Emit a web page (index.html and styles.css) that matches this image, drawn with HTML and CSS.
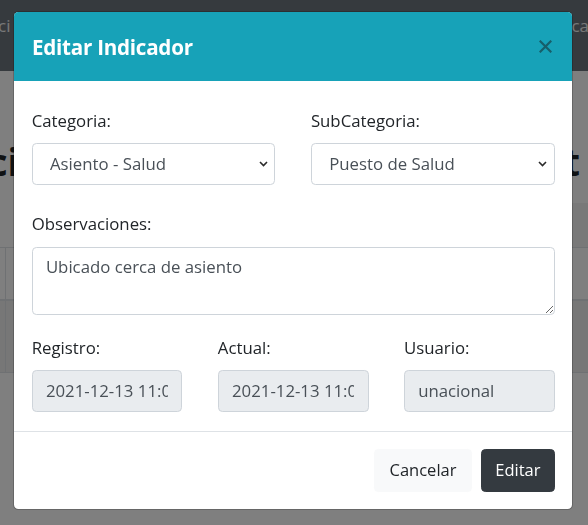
FILE: index.html
```html
<!DOCTYPE html>
<html lang="es">
<head>
<meta charset="utf-8">
<title>Editar Indicador</title>
<link rel="stylesheet" href="styles.css">
</head>
<body>
<div class="page">
  <header class="navbar">
    <span class="nav-left">ci</span>
    <span class="nav-right">ca</span>
  </header>
  <main class="content">
    <div class="heading">
      <span class="h-left">ci</span>
      <span class="h-right">t</span>
    </div>
    <div class="toolbar"><div class="toolbar-box"></div></div>
    <div class="table">
      <div class="trow thead"><div class="cell first"></div><div class="cell"></div></div>
      <div class="trow tbody"><div class="cell first"></div><div class="cell"></div></div>
    </div>
  </main>
</div>
<div class="backdrop"></div>
<div class="modal">
  <div class="modal-header">
    <h5 class="modal-title">Editar Indicador</h5>
    <button class="close" type="button" aria-label="Cerrar">
      <svg width="13" height="13" viewBox="0 0 13 13"><path d="M1.5 1.5 L11.5 11.5 M11.5 1.5 L1.5 11.5" stroke="currentColor" stroke-width="2.2" fill="none" stroke-linecap="square"/></svg>
    </button>
  </div>
  <div class="modal-body">
    <div class="grid-2 group-1">
      <div class="field">
        <label class="label">Categoria:</label>
        <div class="select-wrap">
          <select class="control select"><option>Asiento - Salud</option></select>
          <svg class="chevron" width="9" height="6" viewBox="0 0 9 6"><path d="M1 1 L4.5 4.5 L8 1" stroke="#2b2b2b" stroke-width="1.6" fill="none"/></svg>
        </div>
      </div>
      <div class="field">
        <label class="label">SubCategoria:</label>
        <div class="select-wrap">
          <select class="control select"><option>Puesto de Salud</option></select>
          <svg class="chevron" width="9" height="6" viewBox="0 0 9 6"><path d="M1 1 L4.5 4.5 L8 1" stroke="#2b2b2b" stroke-width="1.6" fill="none"/></svg>
        </div>
      </div>
    </div>
    <div class="field group-2">
      <label class="label">Observaciones:</label>
      <textarea class="control textarea" rows="2">Ubicado cerca de asiento</textarea>
    </div>
    <div class="grid-3 group-3">
      <div class="field">
        <label class="label">Registro:</label>
        <input class="control readonly" type="text" value="2021-12-13 11:05:32" readonly>
      </div>
      <div class="field">
        <label class="label">Actual:</label>
        <input class="control readonly" type="text" value="2021-12-13 11:05:32" readonly>
      </div>
      <div class="field">
        <label class="label">Usuario:</label>
        <input class="control readonly" type="text" value="unacional" readonly>
      </div>
    </div>
  </div>
  <div class="modal-footer">
    <button class="btn btn-light" type="button">Cancelar</button>
    <button class="btn btn-dark" type="button">Editar</button>
  </div>
</div>
</body>
</html>
```
FILE: styles.css
```css
* { box-sizing: border-box; }
html, body { margin: 0; padding: 0; }
body {
  width: 588px;
  height: 525px;
  overflow: hidden;
  background: #ffffff;
  font-family: "Open Sans", "Noto Sans", sans-serif;
  color: #212529;
}

/* ---------- page behind the modal ---------- */
.navbar {
  height: 71px;
  background: #6c757d;
  color: #f0f0f0;
  display: flex;
  justify-content: space-between;
  align-items: flex-start;
  padding-top: 13px;
  font-size: 17px;
  line-height: 26px;
}
.nav-left { margin-left: -2px; }
.nav-right { margin-right: -1px; }

.heading {
  height: 132px;
  display: flex;
  justify-content: space-between;
  align-items: flex-start;
  padding-top: 66px;
  font-size: 38px;
  font-weight: 700;
  line-height: 48px;
  color: #212529;
}
.h-left { margin-left: -12px; }
.h-right { margin-right: 8px; }

.toolbar {
  height: 44px;
  display: flex;
  justify-content: flex-end;
}
.toolbar-box {
  width: 200px;
  background: #f2f2f2;
}

.table { border-top: 1px solid #dee2e6; }
.trow {
  display: grid;
  grid-template-columns: 5px 1fr;
}
.thead {
  height: 53px;
  border-bottom: 2px solid #dee2e6;
}
.tbody {
  height: 72px;
  background: #eeeeee;
  border-bottom: 1px solid #dee2e6;
}
.cell + .cell { border-left: 1px solid #dee2e6; }

.backdrop {
  position: fixed;
  inset: 0;
  background: rgba(0, 0, 0, 0.5);
}

/* ---------- modal ---------- */
.modal {
  position: fixed;
  top: 11px;
  left: 12.7px;
  width: 560.6px;
  background: #ffffff;
  background-clip: padding-box;
  border: 1px solid rgba(0, 0, 0, 0.2);
  border-radius: 5.3px;
}

.modal-header {
  height: 69px;
  background: #17a2b8;
  border-radius: 4.3px 4.3px 0 0;
  display: flex;
  align-items: center;
  justify-content: space-between;
  padding: 0 20.3px 0 18.3px;
}
.modal-title {
  margin: 0;
  color: #ffffff;
  font-size: 20.6px;
  font-weight: 700;
  line-height: 30px;
  letter-spacing: -0.25px;
}
.close {
  border: 0;
  background: transparent;
  padding: 0;
  width: 13px;
  height: 13px;
  color: #175f6a;
  display: flex;
}

.modal-body {
  padding: 27px 17.6px 19.4px 18px;
}
.grid-2 {
  display: grid;
  grid-template-columns: 1fr 1fr;
  column-gap: 35.4px;
}
.grid-3 {
  display: grid;
  grid-template-columns: 1fr 1fr 1fr;
  column-gap: 35.4px;
}
.group-2 { margin-top: 26.7px; }
.group-3 { margin-top: 20.1px; }

.label {
  display: block;
  font-size: 16.8px;
  line-height: 26.4px;
  margin-bottom: 8.8px;
  color: #212529;
}

.control {
  display: block;
  width: 100%;
  height: 41.6px;
  margin: 0;
  padding: 0 13.2px;
  font-family: "Open Sans", "Noto Sans", sans-serif;
  font-size: 16.8px;
  line-height: 26.4px;
  color: #495057;
  background: #ffffff;
  border: 1px solid #ced4da;
  border-radius: 4.4px;
  outline: none;
}
.select-wrap { position: relative; }
.select {
  -webkit-appearance: none;
  appearance: none;
  padding-left: 17.3px;
}
.chevron {
  position: absolute;
  right: 7.7px;
  top: 18px;
  pointer-events: none;
}
.textarea {
  height: 68px;
  padding: 6.6px 13.2px;
  resize: vertical;
}
.readonly {
  background: #e9ecef;
}

.modal-footer {
  border-top: 1px solid #dee2e6;
  display: flex;
  justify-content: flex-end;
  gap: 9px;
  padding: 17px 17.6px 17.3px;
}
.btn {
  height: 42.7px;
  padding: 0;
  font-family: "Open Sans", "Noto Sans", sans-serif;
  font-size: 16.5px;
  line-height: 26.4px;
  border-radius: 4.4px;
  border: 1px solid transparent;
  text-align: center;
}
.btn-light {
  width: 98px;
  background: #f8f9fa;
  border-color: #f8f9fa;
  color: #212529;
}
.btn-dark {
  width: 73.7px;
  background: #343a40;
  border-color: #343a40;
  color: #ffffff;
}
```
